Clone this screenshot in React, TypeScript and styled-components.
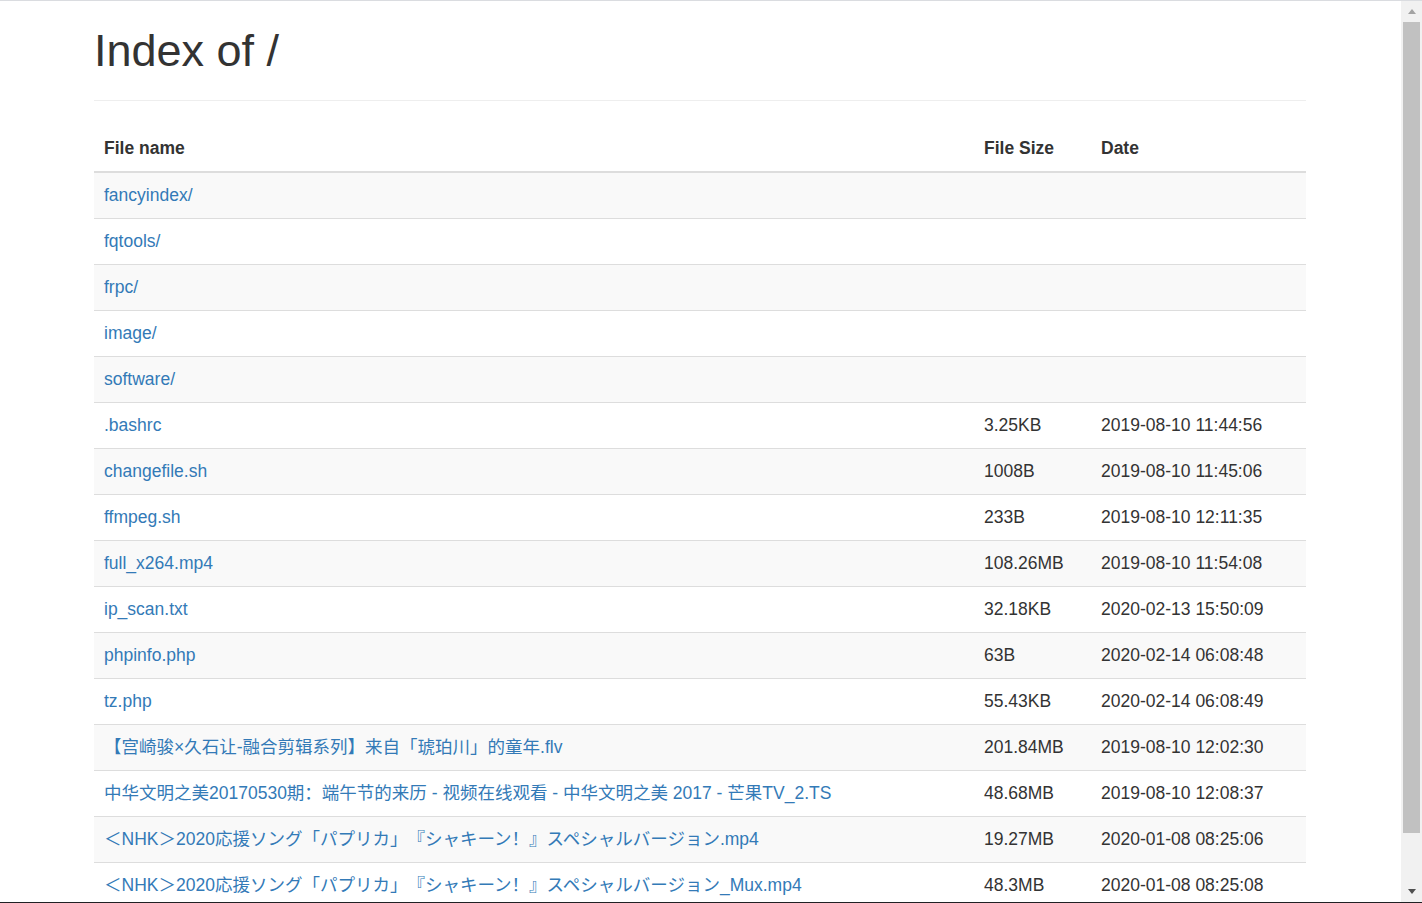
import React from "react";
import styled, { createGlobalStyle } from "styled-components";

const GlobalStyle = createGlobalStyle`
  html::-webkit-scrollbar {
    display: none;
  }
  body {
    margin: 0 22px 0 0;
    padding: 1px 0 0;
    background: #fff;
    color: #333;
    font-family: "Liberation Sans", Arial, "Noto Sans CJK SC", sans-serif;
    font-size: 17.5px;
    line-height: 25px;
    text-spacing-trim: space-all;
  }
`;

const FrameLine = styled.div<{ $edge: "top" | "bottom" }>`
  position: fixed;
  left: 0;
  right: 0;
  height: 1px;
  z-index: 20;
  ${(p) => (p.$edge === "top" ? "top: 0; background: #dadce0;" : "bottom: 0; background: #202124;")}
`;

/* imitation of the browser's vertical scrollbar, fixed over the right edge */
const ScrollBar = styled.div`
  position: fixed;
  top: 1px;
  right: 0;
  bottom: 0;
  width: 21px;
  z-index: 10;
  background: #f1f1f1;
  display: flex;
  flex-direction: column;
`;

const ScrollButton = styled.div`
  height: 21px;
  flex: none;
  display: flex;
  align-items: center;
  justify-content: center;
`;

const Arrow = styled.span<{ $dir: "up" | "down" }>`
  width: 0;
  height: 0;
  border-left: 4.5px solid transparent;
  border-right: 4.5px solid transparent;
  ${(p) =>
    p.$dir === "up"
      ? "border-bottom: 5px solid #a3a3a3; margin-top: -1px;"
      : "border-top: 5px solid #505050; margin-top: -2px;"}
`;

const ScrollTrack = styled.div`
  flex: 1;
  padding: 0 2px;
`;

const ScrollThumb = styled.div`
  height: 811px;
  background: #c1c1c1;
`;

const Container = styled.div`
  width: 1212px;
  margin: 0 auto;
  padding-bottom: 51px;
`;

const PageHeader = styled.div`
  padding: 25px 0 24px;
  border-bottom: 1px solid #eee;
`;

const Title = styled.h1`
  margin: 0;
  font-family: "Liberation Sans", Arial, sans-serif;
  font-size: 45px;
  font-weight: 500;
  line-height: 50px;
  color: #333;
`;

const Table = styled.table`
  width: 100%;
  margin-top: 25px;
  border-collapse: collapse;
  border-spacing: 0;
  table-layout: fixed;
`;

const HeadCell = styled.th<{ $w?: number }>`
  box-sizing: border-box;
  text-align: left;
  font-weight: bold;
  padding: 10px;
  line-height: 25px;
  border-bottom: 2px solid #ddd;
  ${(p) => (p.$w ? `width: ${p.$w}px;` : "")}
`;

const Row = styled.tr<{ $striped: boolean }>`
  background: ${(p) => (p.$striped ? "#f9f9f9" : "#fff")};
`;

const Cell = styled.td`
  padding: 10px;
  line-height: 25px;
  border-top: 1px solid #ddd;
  white-space: nowrap;
  overflow: hidden;
  vertical-align: top;
  height: 25px;
`;

const FileLink = styled.a`
  color: #337ab7;
  text-decoration: none;
`;

type Entry = { name: string; size?: string; date?: string };

const entries: Entry[] = [
  { name: "fancyindex/" },
  { name: "fqtools/" },
  { name: "frpc/" },
  { name: "image/" },
  { name: "software/" },
  { name: ".bashrc", size: "3.25KB", date: "2019-08-10 11:44:56" },
  { name: "changefile.sh", size: "1008B", date: "2019-08-10 11:45:06" },
  { name: "ffmpeg.sh", size: "233B", date: "2019-08-10 12:11:35" },
  { name: "full_x264.mp4", size: "108.26MB", date: "2019-08-10 11:54:08" },
  { name: "ip_scan.txt", size: "32.18KB", date: "2020-02-13 15:50:09" },
  { name: "phpinfo.php", size: "63B", date: "2020-02-14 06:08:48" },
  { name: "tz.php", size: "55.43KB", date: "2020-02-14 06:08:49" },
  {
    name: "【宫崎骏×久石让-融合剪辑系列】来自「琥珀川」的童年.flv",
    size: "201.84MB",
    date: "2019-08-10 12:02:30",
  },
  {
    name: "中华文明之美20170530期：端午节的来历 - 视频在线观看 - 中华文明之美 2017 - 芒果TV_2.TS",
    size: "48.68MB",
    date: "2019-08-10 12:08:37",
  },
  {
    name: "＜NHK＞2020応援ソング「パプリカ」『シャキーン！』スペシャルバージョン.mp4",
    size: "19.27MB",
    date: "2020-01-08 08:25:06",
  },
  {
    name: "＜NHK＞2020応援ソング「パプリカ」『シャキーン！』スペシャルバージョン_Mux.mp4",
    size: "48.3MB",
    date: "2020-01-08 08:25:08",
  },
];

export default function App() {
  return (
    <>
      <GlobalStyle />
      <FrameLine $edge="top" />
      <Container>
        <PageHeader>
          <Title>Index of /</Title>
        </PageHeader>
        <Table>
          <thead>
            <tr>
              <HeadCell>File name</HeadCell>
              <HeadCell $w={117}>File Size</HeadCell>
              <HeadCell $w={215}>Date</HeadCell>
            </tr>
          </thead>
          <tbody>
            {entries.map((e, i) => (
              <Row key={e.name} $striped={i % 2 === 0}>
                <Cell>
                  <FileLink href="#">{e.name}</FileLink>
                </Cell>
                <Cell>{e.size ?? ""}</Cell>
                <Cell>{e.date ?? ""}</Cell>
              </Row>
            ))}
          </tbody>
        </Table>
      </Container>
      <ScrollBar>
        <ScrollButton>
          <Arrow $dir="up" />
        </ScrollButton>
        <ScrollTrack>
          <ScrollThumb />
        </ScrollTrack>
        <ScrollButton>
          <Arrow $dir="down" />
        </ScrollButton>
      </ScrollBar>
      <FrameLine $edge="bottom" />
    </>
  );
}
